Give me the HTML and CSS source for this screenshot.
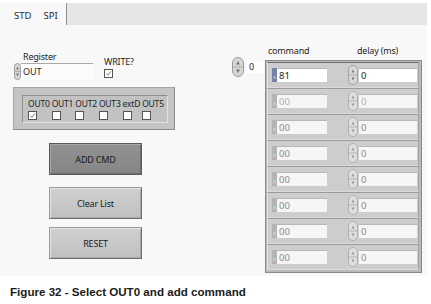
FILE: index.html
```html
<!DOCTYPE html>
<html>
<head>
    <link rel="stylesheet" href="styles.css">
</head>
<body>
<div class="window">
    <div class="tabbar">
        <div class="tabs">
            <span class="tab">STD</span>
            <span class="tab active">SPI</span>
        </div>
    </div>

    <div class="panel">
        <div class="left">
            <div class="top-row">
                <div class="register">
                    <div class="label reg-label">Register</div>
                    <div class="string-ctl">
                        <svg class="spin spin-sm" viewBox="0 0 7 17" preserveAspectRatio="none">
                            <rect x="0.5" y="0.5" width="6" height="16" rx="3" fill="#d9d9d9" stroke="#9c9c9c"/>
                            <line x1="0.5" y1="8.5" x2="6.5" y2="8.5" stroke="#a8a8a8"/>
                            <path d="M2 6.5 L3.5 3.5 L5 6.5 Z" fill="#777"/>
                            <path d="M2 10.5 L3.5 13.5 L5 10.5 Z" fill="#777"/>
                        </svg>
                        <span class="string">OUT</span>
                    </div>
                </div>
                <div class="write">
                    <div class="label">WRITE?</div>
                    <span class="check on">
                        <svg viewBox="0 0 9 9"><path d="M1.5 4.5 L3.6 6.8 L7.6 1.8" fill="none" stroke="#444" stroke-width="0.9"/></svg>
                    </span>
                </div>
            </div>

            <div class="cluster">
                <div class="cluster-inner">
                    <div class="bit">
                        <span class="label">OUT0</span>
                        <span class="check on">
                            <svg viewBox="0 0 9 9"><path d="M1.5 4.5 L3.6 6.8 L7.6 1.8" fill="none" stroke="#444" stroke-width="0.9"/></svg>
                        </span>
                    </div>
                    <div class="bit"><span class="label">OUT1</span><span class="check"></span></div>
                    <div class="bit"><span class="label">OUT2</span><span class="check"></span></div>
                    <div class="bit"><span class="label">OUT3</span><span class="check"></span></div>
                    <div class="bit"><span class="label">extD</span><span class="check"></span></div>
                    <div class="bit"><span class="label">OUT5</span><span class="check"></span></div>
                </div>
            </div>

            <button class="btn btn-dark btn-add">ADD CMD</button>
            <button class="btn btn-clear">Clear List</button>
            <button class="btn btn-reset">RESET</button>
        </div>

        <div class="right">
            <div class="index">
                <svg class="spin spin-idx" viewBox="0 0 12 20">
                    <rect x="0.5" y="0.5" width="11" height="19" rx="5.5" fill="#d6d6d6" stroke="#9c9c9c"/>
                    <line x1="1" y1="10" x2="11" y2="10" stroke="#a8a8a8"/>
                    <path d="M4 7.5 L6 4 L8 7.5 Z" fill="#777"/>
                    <path d="M4 12.5 L6 16 L8 12.5 Z" fill="#777"/>
                </svg>
                <span class="index-val">0</span>
            </div>

            <div class="array">
                <div class="array-head">
                    <span class="label col-cmd">command</span>
                    <span class="label col-delay">delay (ms)</span>
                </div>
                <div class="array-frame">
                    <div class="row first">
                        <span class="radix active">x</span>
                        <span class="field cmd">81</span>
                        <svg class="spin spin-row" viewBox="0 0 10 20">
                            <rect x="0.5" y="0.5" width="9" height="19" rx="4.5" fill="#d9d9d9" stroke="#a2a2a2"/>
                            <line x1="1" y1="10" x2="9" y2="10" stroke="#ababab"/>
                            <path d="M3.5 7.5 L5 4.5 L6.5 7.5 Z" fill="#7a7a7a"/>
                            <path d="M3.5 12.5 L5 15.5 L6.5 12.5 Z" fill="#7a7a7a"/>
                        </svg>
                        <span class="field delay">0</span>
                    </div>
                    <div class="row off light">
                        <span class="radix">x</span>
                        <span class="field cmd">00</span>
                        <svg class="spin spin-row" viewBox="0 0 10 20">
                            <rect x="0.5" y="0.5" width="9" height="19" rx="4.5" fill="#dedede" stroke="#b0b0b0"/>
                            <line x1="1" y1="10" x2="9" y2="10" stroke="#b5b5b5"/>
                            <path d="M3.5 7.5 L5 4.5 L6.5 7.5 Z" fill="#999"/>
                            <path d="M3.5 12.5 L5 15.5 L6.5 12.5 Z" fill="#999"/>
                        </svg>
                        <span class="field delay">0</span>
                    </div>
                    <div class="row off">
                        <span class="radix">x</span>
                        <span class="field cmd">00</span>
                        <svg class="spin spin-row" viewBox="0 0 10 20">
                            <rect x="0.5" y="0.5" width="9" height="19" rx="4.5" fill="#dedede" stroke="#b0b0b0"/>
                            <line x1="1" y1="10" x2="9" y2="10" stroke="#b5b5b5"/>
                            <path d="M3.5 7.5 L5 4.5 L6.5 7.5 Z" fill="#999"/>
                            <path d="M3.5 12.5 L5 15.5 L6.5 12.5 Z" fill="#999"/>
                        </svg>
                        <span class="field delay">0</span>
                    </div>
                    <div class="row off">
                        <span class="radix">x</span>
                        <span class="field cmd">00</span>
                        <svg class="spin spin-row" viewBox="0 0 10 20">
                            <rect x="0.5" y="0.5" width="9" height="19" rx="4.5" fill="#dedede" stroke="#b0b0b0"/>
                            <line x1="1" y1="10" x2="9" y2="10" stroke="#b5b5b5"/>
                            <path d="M3.5 7.5 L5 4.5 L6.5 7.5 Z" fill="#999"/>
                            <path d="M3.5 12.5 L5 15.5 L6.5 12.5 Z" fill="#999"/>
                        </svg>
                        <span class="field delay">0</span>
                    </div>
                    <div class="row off">
                        <span class="radix">x</span>
                        <span class="field cmd">00</span>
                        <svg class="spin spin-row" viewBox="0 0 10 20">
                            <rect x="0.5" y="0.5" width="9" height="19" rx="4.5" fill="#dedede" stroke="#b0b0b0"/>
                            <line x1="1" y1="10" x2="9" y2="10" stroke="#b5b5b5"/>
                            <path d="M3.5 7.5 L5 4.5 L6.5 7.5 Z" fill="#999"/>
                            <path d="M3.5 12.5 L5 15.5 L6.5 12.5 Z" fill="#999"/>
                        </svg>
                        <span class="field delay">0</span>
                    </div>
                    <div class="row off">
                        <span class="radix">x</span>
                        <span class="field cmd">00</span>
                        <svg class="spin spin-row" viewBox="0 0 10 20">
                            <rect x="0.5" y="0.5" width="9" height="19" rx="4.5" fill="#dedede" stroke="#b0b0b0"/>
                            <line x1="1" y1="10" x2="9" y2="10" stroke="#b5b5b5"/>
                            <path d="M3.5 7.5 L5 4.5 L6.5 7.5 Z" fill="#999"/>
                            <path d="M3.5 12.5 L5 15.5 L6.5 12.5 Z" fill="#999"/>
                        </svg>
                        <span class="field delay">0</span>
                    </div>
                    <div class="row off">
                        <span class="radix">x</span>
                        <span class="field cmd">00</span>
                        <svg class="spin spin-row" viewBox="0 0 10 20">
                            <rect x="0.5" y="0.5" width="9" height="19" rx="4.5" fill="#dedede" stroke="#b0b0b0"/>
                            <line x1="1" y1="10" x2="9" y2="10" stroke="#b5b5b5"/>
                            <path d="M3.5 7.5 L5 4.5 L6.5 7.5 Z" fill="#999"/>
                            <path d="M3.5 12.5 L5 15.5 L6.5 12.5 Z" fill="#999"/>
                        </svg>
                        <span class="field delay">0</span>
                    </div>
                    <div class="row off">
                        <span class="radix">x</span>
                        <span class="field cmd">00</span>
                        <svg class="spin spin-row" viewBox="0 0 10 20">
                            <rect x="0.5" y="0.5" width="9" height="19" rx="4.5" fill="#dedede" stroke="#b0b0b0"/>
                            <line x1="1" y1="10" x2="9" y2="10" stroke="#b5b5b5"/>
                            <path d="M3.5 7.5 L5 4.5 L6.5 7.5 Z" fill="#999"/>
                            <path d="M3.5 12.5 L5 15.5 L6.5 12.5 Z" fill="#999"/>
                        </svg>
                        <span class="field delay">0</span>
                    </div>
                </div>
            </div>
        </div>
    </div>

    <p class="caption">Figure 32 - Select OUT0 and add command</p>
</div>
</body>
</html>
```

FILE: styles.css
```css
* {
    margin: 0;
    padding: 0;
    box-sizing: border-box;
}

body {
    background: white;
    font-family: 'Noto Sans', 'Open Sans', sans-serif;
    font-size: 9px;
    color: #1e1e1e;
}

.window {
    width: 431px;
    padding-top: 3px;
}

/* Tab strip */
.tabbar {
    display: flex;
    width: 427px;
    height: 22px;
    background: #e7e5e5;
}

.tabs {
    display: flex;
    align-items: flex-end;
    padding: 0 0 3px 8px;
    background: #f8f8f8;
    border-right: 1px solid #8f8f8f;
}

.tab {
    font-size: 9.5px;
    color: #2a2a2a;
    padding: 0 6px;
}

.tab.active {
    padding: 0 8px 0 6px;
}

/* Front panel */
.panel {
    display: flex;
    width: 427px;
    height: 251px;
    background: #f8f8f8;
}

.left {
    width: 232px;
    padding-top: 26px;
}

.label {
    line-height: 11px;
    white-space: nowrap;
    letter-spacing: -0.2px;
}

.top-row {
    display: flex;
    align-items: flex-start;
    margin-left: 14px;
}

.register {
    width: 79px;
}

.reg-label {
    padding-left: 9px;
}

.string-ctl {
    display: flex;
    margin-top: 1px;
    height: 17px;
}

.spin {
    display: block;
    flex-shrink: 0;
}

.spin-sm {
    width: 7px;
    height: 17px;
}

.string {
    flex: 1;
    background: #fcfcfc;
    border-top: 1px solid #aaa;
    padding: 2px 0 0 2px;
    line-height: 12px;
}

.write {
    margin: 5px 0 0 11px;
}

.check {
    display: block;
    width: 9px;
    height: 9px;
    background: white;
    border: 1px solid #555;
}

.write .check {
    margin-top: 2px;
}

.check svg {
    display: block;
    width: 7px;
    height: 7px;
}

/* Output bits cluster */
.cluster {
    margin: 7px 0 0 13px;
    width: 162px;
    height: 43px;
    background: #c4c4c4;
    border: 1px solid #8a8a8a;
    border-top-color: #a6a6a6;
    border-left-color: #a6a6a6;
    padding: 7px 6px 6px 8px;
}

.cluster-inner {
    display: flex;
    gap: 2px;
    height: 28px;
    padding: 3px 0 0 5px;
    background: #c2c2c2;
    border: 1px solid;
    border-color: #8f8f8f #e2e2e2 #e2e2e2 #8f8f8f;
}

.bit .label {
    display: block;
    font-size: 8.5px;
    line-height: 10px;
    letter-spacing: -0.2px;
}

.bit .check {
    margin-top: 2px;
}

/* Buttons */
.btn {
    display: block;
    margin-left: 49px;
    width: 93px;
    height: 32px;
    font-family: 'Noto Sans', 'Open Sans', sans-serif;
    font-size: 9px;
    letter-spacing: -0.2px;
    color: #1a1a1a;
    border: 1px solid #6e6e6e;
    border-top-color: #9a9a9a;
    border-left-color: #9a9a9a;
    background: linear-gradient(#d0d0d0, #c0c0c0);
    box-shadow: inset 1px 1px 0 #e4e4e4, inset -1px -1px 0 #a8a8a8;
}

.btn-dark {
    background: linear-gradient(#929292, #858585);
    border-color: #5a5a5a;
    box-shadow: inset 1px 1px 0 #a6a6a6, inset -1px -1px 0 #6e6e6e;
}

.btn-add {
    margin-top: 13px;
}

.btn-clear {
    margin-top: 12px;
}

.btn-reset {
    margin-top: 8px;
}

/* Command array */
.right {
    display: flex;
    align-items: flex-start;
}

.index {
    display: flex;
    align-items: flex-start;
    margin-top: 32px;
}

.spin-idx {
    width: 12px;
    height: 20px;
}

.index-val {
    margin: 4px 0 0 3px;
    width: 17px;
    height: 12px;
    line-height: 12px;
    padding-left: 2px;
    background: white;
}

.array {
    margin: 20px 0 0 1px;
}

.array-head {
    display: flex;
    height: 15px;
}

.col-cmd {
    margin-left: 3px;
    width: 89px;
}

.array-frame {
    width: 157px;
    height: 213px;
    background: #bababa;
    border: 1px solid #8a8a8a;
    padding: 1px 2px 2px 1px;
}

.row {
    display: flex;
    align-items: center;
    height: 26px;
    padding-left: 4px;
    background: #cdcdcd;
    border-top: 1px solid #9b9b9b;
    border-left: 1px solid #e4e4e4;
    border-right: 1px solid #a5a5a5;
    border-bottom: 1px solid #dadada;
}

.row.first {
    border-top-color: #707070;
}

.radix {
    width: 5px;
    height: 14px;
    background: #b4b4b4;
    color: #e8e8e8;
    font-size: 5px;
    line-height: 18px;
    text-align: center;
}

.radix.active {
    background: #7482a8;
}

.field {
    height: 14px;
    line-height: 14px;
    padding-left: 2px;
    background: white;
    border-top: 1px solid #b8b8b8;
    font-size: 9.5px;
}

.cmd {
    width: 50px;
}

.spin-row {
    width: 10px;
    height: 20px;
    margin-left: 21px;
}

.delay {
    width: 58px;
    margin-left: 1px;
}

.row.off .field {
    background: #f6f6f6;
    color: #8a8a8a;
}

.row.light .field {
    color: #b0b0b0;
}

.caption {
    margin: 9px 0 0 10px;
    font-family: 'Liberation Sans', Arial, sans-serif;
    font-weight: bold;
    font-size: 11.6px;
    line-height: 14px;
    color: #1a1a1a;
}
```
